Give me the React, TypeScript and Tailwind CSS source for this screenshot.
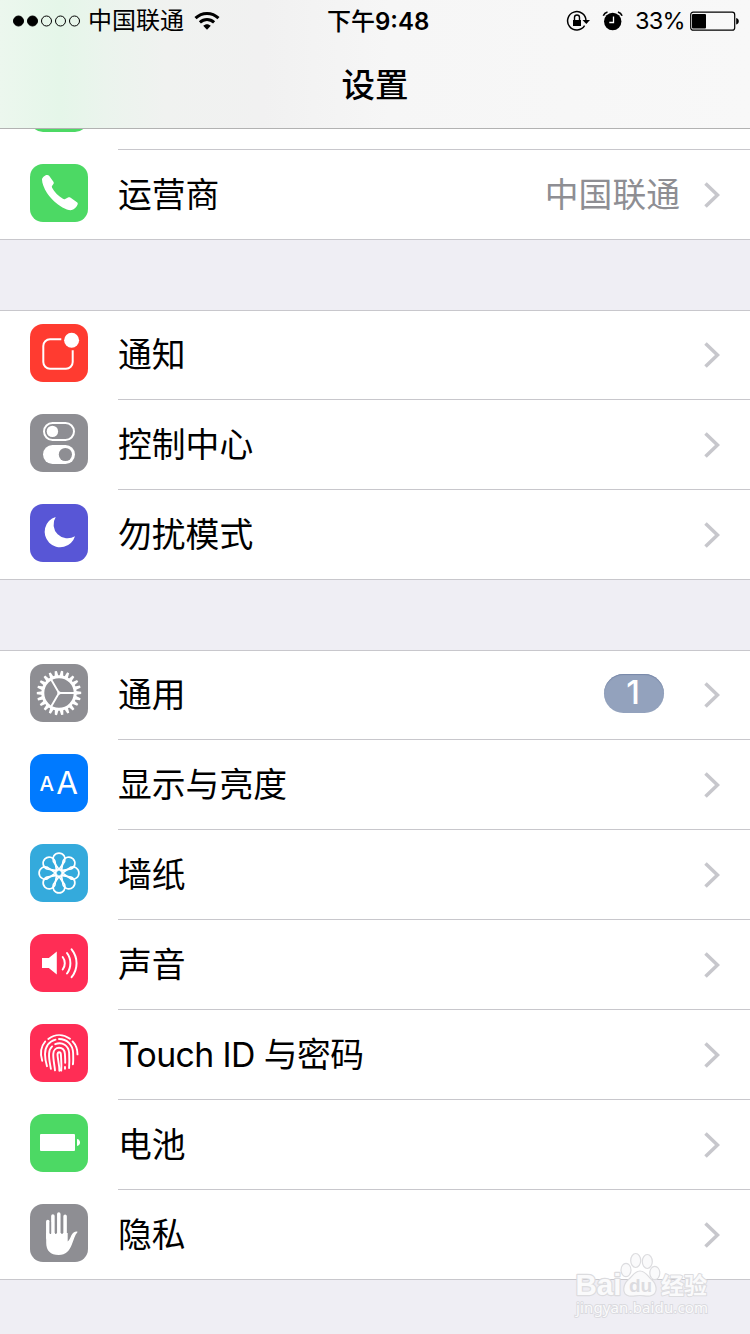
import type { ReactNode } from "react";

const TEETH = Array.from({ length: 22 }, (_, i) => (i * 360) / 22);
const PETALS = Array.from({ length: 8 }, (_, i) => i * 45);

function PhoneIcon() {
  return (
    <path
      fill="#fff"
      d="M12 15.5c0-1.7 2.600-4.100 4.400-4.500 1.300-.3 2.200.1 2.900 1.100l4.100 5.600c.6.900.5 1.500 0 2.300l-1.400 1.900c-.3.600-.3 1.100.1 1.800 2.400 4.400 6.300 8.300 10.800 11.100.9.600 1.500.6 2.300.1l2.800-1.400c.8-.5 1.500-.4 2.300.1l6.300 4.300c1.200.8 1.500 1.700.9 2.900-1 2.200-3.200 4.700-5.700 5.300-2.500.4-6-.8-9.300-2.600C26.500 40 20.500 34.500 17 29c-3-4.700-5-10-5-13.500z"
    />
  );
}

function NotificationIcon() {
  return (
    <>
      <path
        d="M31.300 15.300H20a6.700 6.700 0 0 0-6.700 6.700v16a6.700 6.700 0 0 0 6.700 6.700h16a6.700 6.700 0 0 0 6.700-6.700V26.300"
        fill="none"
        stroke="#fff"
        strokeWidth="2"
      />
      <circle cx="41.600" cy="16.300" r="7.500" fill="#fff" />
    </>
  );
}

function ControlIcon() {
  return (
    <>
      <rect x="14" y="9" width="30" height="17" rx="8.500" fill="none" stroke="#fff" strokeWidth="2" />
      <circle cx="22.400" cy="17.400" r="5.700" fill="#fff" />
      <rect x="13" y="31" width="32" height="19" rx="9.500" fill="#fff" />
      <circle cx="35.400" cy="40.500" r="6.600" fill="#8e8e93" />
    </>
  );
}

function MoonIcon() {
  return <path fill="#fff" d="M25.700 12.900A15.500 15.500 0 1 0 45 32.200 14 14 0 0 1 25.700 12.900z" />;
}

function GearIcon() {
  return (
    <g stroke="#fff" fill="none">
      <circle cx="29" cy="29" r="16.200" strokeWidth="3" />
      {TEETH.map((deg) => (
        <path
          key={deg}
          d="M27.100 12.200L27.900 6.800h2.200l.8 5.400z"
          fill="#fff"
          stroke="none"
          transform={`rotate(${deg + 8} 29 29)`}
        />
      ))}
      <path d="M29 29h15M29 29l-7.700-13.300M29 29l-7.700 13.300" strokeWidth="1.900" />
      <circle cx="29" cy="29" r="1.700" fill="#fff" stroke="none" />
    </g>
  );
}

function DisplayIcon() {
  return (
    <g fill="#fff" fontFamily="Inter, sans-serif">
      <text x="9.600" y="36.800" fontSize="20.500" fontWeight="500">A</text>
      <text x="26.200" y="40" fontSize="31.500" fontWeight="400">A</text>
    </g>
  );
}

function FlowerIcon() {
  return (
    <g stroke="#fff" strokeWidth="1.700" fill="none">
      <circle cx="29" cy="29" r="3.400" />
      {PETALS.map((deg) => (
        <path
          key={deg}
          d="M29 25.600L23.400 17.600A6.100 6.100 0 1 1 34.600 17.600z"
          transform={`rotate(${deg} 29 29)`}
        />
      ))}
    </g>
  );
}

function SoundIcon() {
  return (
    <>
      <path fill="#fff" d="M12 24h6.800l8-6.500v23l-8-6.500H12z" />
      <path
        d="M32.700 23c2.800 3.600 2.800 8.900 0 12.500M37 19c4.500 6 4.500 14.500 0 20.500M41.600 15.300c6.600 8.200 6.600 19.700 0 27.900"
        fill="none"
        stroke="#fff"
        strokeWidth="2"
        strokeLinecap="round"
      />
    </>
  );
}

function TouchIcon() {
  return (
    <g fill="none" stroke="#fff" strokeWidth="1.900" strokeLinecap="round">
      <path d="M18.300 14.900c6.800-5 15-5 21.700-.1" />
      <path d="M12.200 36.800c-2.300-7.300-1.500-14 3-19.300M42.600 17.400c3.600 3.800 4.900 7.800 4.900 13" />
      <path d="M17 42.200c-1-3.500-2-7.500-2-12 0-7.800 4.300-13.200 10.500-14.600M29 15c8 0 13.700 5.800 14.100 13.700.2 4.500.3 8.500-.2 11.700" />
      <path d="M20.900 44.800c-1-5.500-2.200-10-1.800-15.400.2-3 1.200-5.400 3-7M25.200 20.200c7.200-3 13.400 1.700 13.900 8.600.3 5.400.4 10.200 0 15.200" />
      <path d="M25 46.300c-.6-6-2-11.300-1.700-16.600.2-3.600 2.700-5.900 5.700-5.900 3.300 0 5.600 2.400 5.900 6 .2 3 .4 6.200.3 9M35 43v1.700" />
      <path d="M29.400 46.800c0-6-1.700-11.500-1.900-16 0-3.400 3.200-3.500 3.400-.2.300 5 .8 10.700.3 16" />
    </g>
  );
}

function BatteryIcon() {
  return (
    <g fill="#fff">
      <rect x="10" y="20" width="35" height="17" rx="1" />
      <path d="M47 25c4 0.300 4 6.700 0 7z" />
    </g>
  );
}

function HandIcon() {
  return (
    <g fill="#fff">
      <path d="M16.200 29h21.500v8.500c1.800-1.500 2.700-4 3.700-6.300 1.200-2.600 3.400-4 5.600-3.800.8.100.6.700.2 1.200-2.400 2.700-3.300 7-5 11-2.800 7.500-6.200 11.400-13.500 11.400-8.200 0-12.500-4.200-12.500-12.200z" />
      <path
        d="M17.800 17.500V34M22.900 12v20M28.800 10.100V32M35.100 12.200V32"
        stroke="#fff"
        strokeWidth="3.500"
        strokeLinecap="round"
      />
      <path d="M20.400 18v12M25.800 14v16M32 14v16" stroke="#8e8e93" strokeWidth="1.400" />
    </g>
  );
}

interface RowProps {
  label: string;
  color: string;
  icon: ReactNode;
  value?: string;
  badge?: number;
  last?: boolean;
  tight?: boolean;
}

function Row({ label, color, icon, value, badge, last, tight }: RowProps) {
  return (
    <div className="flex h-[90px] shrink-0 pl-[30px]">
      <svg viewBox="0 0 58 58" className={`mt-[14px] h-[58px] w-[58px] shrink-0 rounded-[13px] ${color}`}>
        {icon}
      </svg>
      <div
        className={`ml-[30px] flex flex-1 items-center border-b pr-[30px] ${
          last ? "border-transparent" : "border-[#c8c7cc]"
        }`}
      >
        <span className={`flex-1 pt-px text-[33.8px] leading-none ${tight ? "tracking-[-0.6px]" : ""}`}>
          {label}
        </span>
        {value && <span className="mr-6 pt-px text-[33.8px] leading-none text-[#8e8e93]">{value}</span>}
        {badge && (
          <span className="mr-10 mb-[3px] flex h-[39px] w-[60px] items-center justify-center rounded-full bg-[#93a2bd] pr-[2px] pb-0.5 text-[33px] leading-none font-medium text-white shadow-[inset_0_1px_1px_#7888a8]">
            {badge}
          </span>
        )}
        <svg className="mt-px h-[26px] w-4" viewBox="0 0 16 26" fill="none" stroke="#c7c7cc" strokeWidth="3.600">
          <path d="M1.500 1.500L13.500 13L1.500 24.500" />
        </svg>
      </div>
    </div>
  );
}

function Group({ children }: { children: ReactNode }) {
  return (
    <section className="bg-white shadow-[inset_0_1px_0_#c8c7cc,inset_0_-1px_0_#c8c7cc]">{children}</section>
  );
}

function StatusBar() {
  return (
    <div className="flex h-[41px] items-center text-2xl leading-none">
      <div className="flex w-[327px] items-center pl-[13px]">
        <svg width="68" height="12" viewBox="0 0 68 12" stroke="#000">
          <circle cx="5.500" cy="6" r="5" fill="#000" />
          <circle cx="19.500" cy="6" r="5" fill="#000" />
          <circle cx="33.500" cy="6" r="5" fill="none" />
          <circle cx="47.500" cy="6" r="5" fill="none" />
          <circle cx="61.500" cy="6" r="5" fill="none" />
        </svg>
        <span className="ml-[7px] pt-px">中国联通</span>
        <svg className="ml-[10px]" width="26" height="20" viewBox="0 0 26 20" fill="none" stroke="#000" strokeWidth="3">
          <path d="M1.500 7.200c6.500-6.300 16.500-6.300 23 0" />
          <path d="M5.900 11.400c4.200-3.900 10-3.900 14.200 0" />
          <path d="M9.200 14.800c2.300-2.100 5.300-2.100 7.600 0L13 18.800z" fill="#000" stroke="none" />
        </svg>
      </div>
      <div className="flex w-[239px] items-center pt-0.5">
        <span className="font-medium">下午</span>
        <span className="text-[24px] font-semibold">9:48</span>
      </div>
      <svg width="25" height="22" viewBox="0 0 25 22" fill="none" stroke="#000">
        <path d="M18.600 15.700A9.200 9.200 0 1 1 20 11" strokeWidth="1.500" />
        <path d="M16.500 10h7.500l-3.700 4z" fill="#000" stroke="none" />
        <rect x="7" y="10" width="8" height="6" fill="#000" stroke="none" />
        <path d="M8.500 10V7.500a2.500 2.500 0 0 1 5 0V10" strokeWidth="1.400" />
      </svg>
      <svg className="ml-[11px]" width="22" height="20" viewBox="0 0 22 20">
        <circle cx="10.700" cy="10.500" r="8.700" />
        <path d="M1.300 4.800A6 6 0 0 1 5.500 1M15.900 1a6 6 0 0 1 4.200 3.800" fill="none" stroke="#000" strokeWidth="1.600" />
        <path d="M11.500 5.500v6H7.300" fill="none" stroke="#fff" strokeWidth="1.300" />
      </svg>
      <span className="ml-[11px] w-[55px] pt-px text-[23.500px] tracking-[-0.800px]">33%</span>
      <svg width="50" height="20" viewBox="0 0 50 20">
        <rect x="0.700" y="1.200" width="44" height="18" rx="2.500" fill="none" stroke="#000" strokeWidth="1.200" />
        <rect x="2" y="3" width="14" height="14.500" rx="1" />
        <path d="M46.200 7c3.500.5 3.500 6 0 6.500z" />
      </svg>
    </div>
  );
}

function Watermark() {
  return (
    <svg className="absolute right-0 bottom-0" width="190" height="94" viewBox="0 0 190 94">
      <g fill="#fafafb" stroke="#dcdcdf" strokeWidth="1.200" strokeLinejoin="round">
        <text
          x="15.500"
          y="55"
          fontSize="29.500"
          fontWeight="700"
          fontFamily="'Liberation Sans', sans-serif"
          strokeWidth="2.400"
          paintOrder="stroke"
        >
          Bai
        </text>
        <ellipse cx="66" cy="30" rx="5" ry="6.700" />
        <ellipse cx="75.700" cy="20.500" rx="5" ry="7" />
        <ellipse cx="87.300" cy="21.500" rx="5" ry="7" />
        <ellipse cx="94.800" cy="33" rx="5" ry="6.700" />
        <path d="M80 31c5 0 7.500 4.500 11 8 6 5 8 15-1 17-4 .7-6-.5-10-.5s-7 1.200-11 .5c-8-2-6-12 0-17 4-3.500 6-8 11-8z" />
        <text
          x="69"
          y="52"
          fontSize="19"
          fontWeight="700"
          fontFamily="'Liberation Sans', sans-serif"
          fill="#dcdce0"
          stroke="none"
        >
          du
        </text>
        <text
          x="101"
          y="53.500"
          fontSize="23"
          fontWeight="700"
          fontFamily="'Noto Sans CJK SC', sans-serif"
          strokeWidth="2"
          paintOrder="stroke"
        >
          经验
        </text>
      </g>
      <text
        x="16"
        y="73"
        fontSize="15"
        textLength="132"
        fontFamily="'Noto Sans', sans-serif"
        fill="#fafafb"
        stroke="#dadadf"
        strokeWidth="1.800"
        paintOrder="stroke"
      >
        jingyan.baidu.com
      </text>
    </svg>
  );
}

export default function App() {
  return (
    <div className="relative flex h-[1334px] w-[750px] flex-col overflow-hidden bg-[#efeef4] font-[Inter,'Noto_Sans_CJK_SC',sans-serif] text-black">
      <header className="h-[129px] shrink-0 border-b border-[#b2b2b2] bg-[linear-gradient(90deg,#ecf7ee_0%,#e5f6e9_8%,#ebf4ed_14%,#f0f2f0_22%,#f1f1f1_35%,#f6f6f6_52%,#f8f8f8_100%)]">
        <StatusBar />
        <h1 className="mt-[28px] text-center text-[33.500px] leading-none font-medium">设置</h1>
      </header>

      <main className="flex flex-col gap-[70px]">
        <section className="bg-white shadow-[inset_0_-1px_0_#c8c7cc]">
          {/* previous row, scrolled under the header */}
          <div className="flex h-[21px] flex-col justify-end overflow-hidden">
            <Row label="" color="bg-[#4cd964]" icon={null} />
          </div>
          <Row label="运营商" color="bg-[#4cd964]" icon={<PhoneIcon />} value="中国联通" last />
        </section>

        <Group>
          <Row label="通知" color="bg-[#ff3b30]" icon={<NotificationIcon />} />
          <Row label="控制中心" color="bg-[#8e8e93]" icon={<ControlIcon />} />
          <Row label="勿扰模式" color="bg-[#5856d6]" icon={<MoonIcon />} last />
        </Group>

        <Group>
          <Row label="通用" color="bg-[#8e8e93]" icon={<GearIcon />} badge={1} />
          <Row label="显示与亮度" color="bg-[#007aff]" icon={<DisplayIcon />} />
          <Row label="墙纸" color="bg-[#34aadc]" icon={<FlowerIcon />} />
          <Row label="声音" color="bg-[#ff2d55]" icon={<SoundIcon />} />
          <Row label="Touch ID 与密码" color="bg-[#ff2d55]" icon={<TouchIcon />} tight />
          <Row label="电池" color="bg-[#4cd964]" icon={<BatteryIcon />} />
          <Row label="隐私" color="bg-[#8e8e93]" icon={<HandIcon />} last />
        </Group>
      </main>

      <Watermark />
    </div>
  );
}
